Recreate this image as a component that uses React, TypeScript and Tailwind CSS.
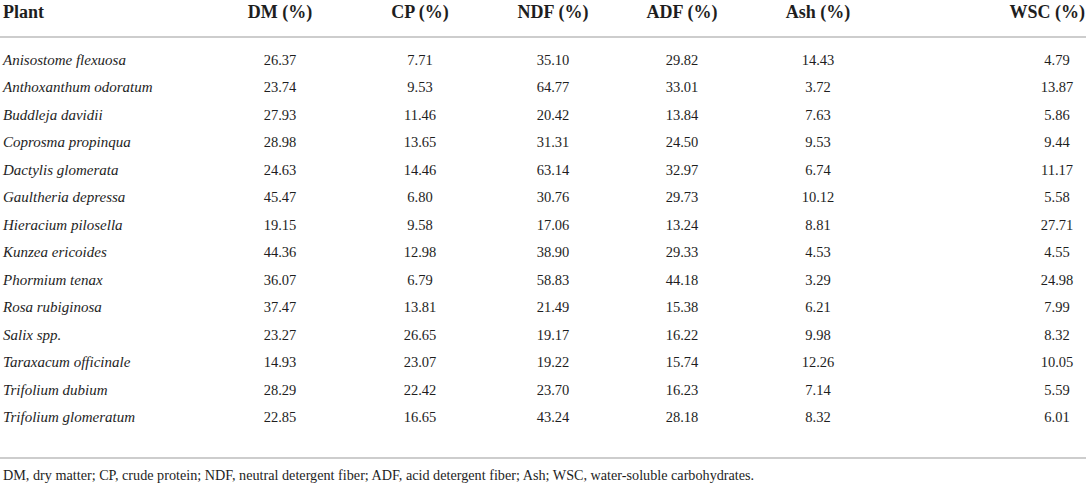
import React from "react";

const headers = ["DM (%)", "CP (%)", "NDF (%)", "ADF (%)", "Ash (%)"];

const rows: [string, string[]][] = [
  ["Anisostome flexuosa", ["26.37", "7.71", "35.10", "29.82", "14.43", "4.79"]],
  ["Anthoxanthum odoratum", ["23.74", "9.53", "64.77", "33.01", "3.72", "13.87"]],
  ["Buddleja davidii", ["27.93", "11.46", "20.42", "13.84", "7.63", "5.86"]],
  ["Coprosma propinqua", ["28.98", "13.65", "31.31", "24.50", "9.53", "9.44"]],
  ["Dactylis glomerata", ["24.63", "14.46", "63.14", "32.97", "6.74", "11.17"]],
  ["Gaultheria depressa", ["45.47", "6.80", "30.76", "29.73", "10.12", "5.58"]],
  ["Hieracium pilosella", ["19.15", "9.58", "17.06", "13.24", "8.81", "27.71"]],
  ["Kunzea ericoides", ["44.36", "12.98", "38.90", "29.33", "4.53", "4.55"]],
  ["Phormium tenax", ["36.07", "6.79", "58.83", "44.18", "3.29", "24.98"]],
  ["Rosa rubiginosa", ["37.47", "13.81", "21.49", "15.38", "6.21", "7.99"]],
  ["Salix spp.", ["23.27", "26.65", "19.17", "16.22", "9.98", "8.32"]],
  ["Taraxacum officinale", ["14.93", "23.07", "19.22", "15.74", "12.26", "10.05"]],
  ["Trifolium dubium", ["28.29", "22.42", "23.70", "16.23", "7.14", "5.59"]],
  ["Trifolium glomeratum", ["22.85", "16.65", "43.24", "28.18", "8.32", "6.01"]],
];

const grid =
  "grid grid-cols-[210px_140px_140px_126px_132px_140px_1fr_68px] items-center";

export default function App() {
  return (
    <div
      className="w-[1089px] h-[488px] bg-white text-[#1e1e1e] overflow-hidden"
      style={{ fontFamily: '"Liberation Serif", "Times New Roman", serif' }}
    >
      <div className="w-[1086px]">
        <div className={`${grid} h-[38px] items-start border-b-2 border-[#cdcdcd]`}>
          <div className="pl-[3px] text-[18px] leading-[24px] font-bold">Plant</div>
          {headers.map((h) => (
            <div key={h} className="flex justify-center whitespace-nowrap text-[18px] leading-[24px] font-bold">
              {h}
            </div>
          ))}
          <div />
          <div className="flex justify-end pr-[1px] whitespace-nowrap text-[18px] leading-[24px] font-bold">
            WSC (%)
          </div>
        </div>
        <div className="pt-[8px] pb-[26px] border-b-2 border-[#cdcdcd]">
          {rows.map(([name, vals]) => (
            <div key={name} className={`${grid} h-[27.5px]`}>
              <div className="pl-[3px] italic text-[15px] leading-[20px] whitespace-nowrap">{name}</div>
              {vals.slice(0, 5).map((v, i) => (
                <div key={i} className="flex justify-center text-[14.5px] leading-[20px]">
                  {v}
                </div>
              ))}
              <div />
              <div className="flex justify-center pl-[10px] text-[14.5px] leading-[20px]">{vals[5]}</div>
            </div>
          ))}
        </div>
        <div className="pl-[3px] pt-[7px] text-[14.2px] leading-[18px] whitespace-nowrap">
          DM, dry matter; CP, crude protein; NDF, neutral detergent fiber; ADF, acid detergent fiber; Ash; WSC,
          water-soluble carbohydrates.
        </div>
      </div>
    </div>
  );
}
